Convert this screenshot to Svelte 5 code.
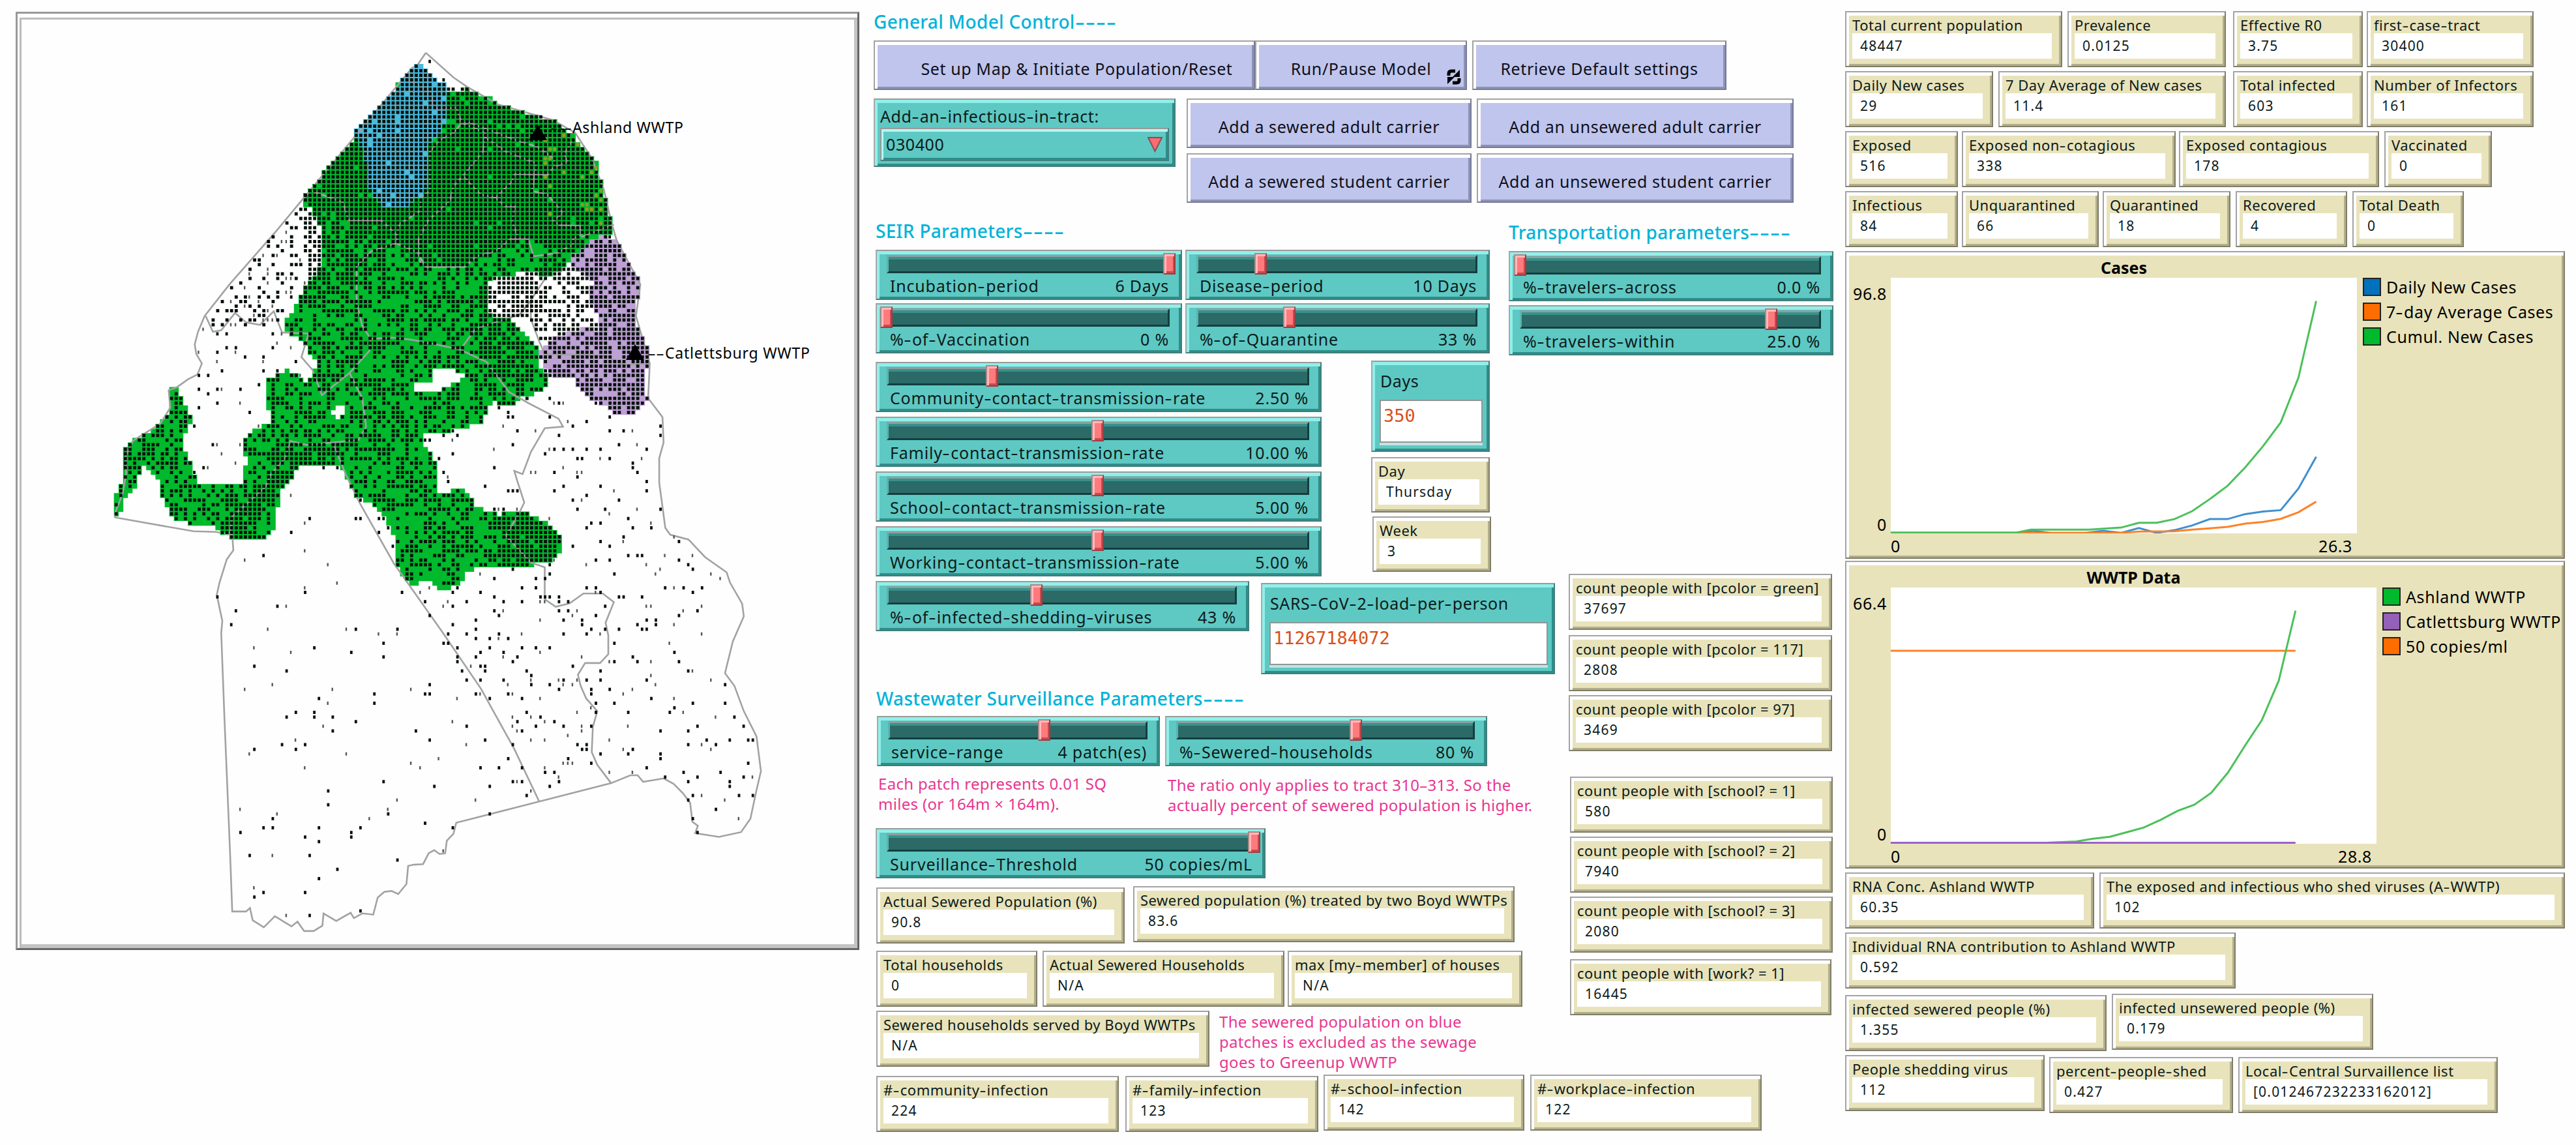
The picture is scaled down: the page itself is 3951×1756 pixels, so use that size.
<script lang="ts">
  type Point = [number, number];
  type Monitor = { label: string; value: string; w: number; gap?: number; drop?: number };
  type Slider = { label: string; value: string; w: number; knob: number };
  type Series = { color: string; points: Point[] };
  type Plot = {
    title: string; xMax: number; yMax: number; w: number; h: number;
    legend: { color: string; name: string }[]; series: Series[];
  };

  const GREEN = '#00b92c';

  // ---- map ----
  const CELL = 7.08;
  const SX = 0.8482;
  const SY = 0.4847;
  const ORIGIN = { x: 26, y: 20 };

  const parse = (s: string): Point[] => s.trim().split(/\s+/).map((p) => p.split(',').map(Number) as Point);

  const sewered = parse(`747,205 760,205 775,225 790,248 803,265 803,290 835,290 840,275 850,278 855,290 880,305
    900,325 930,348 960,362 985,375 1005,385 1020,405 1040,430 1050,460 1070,495 1080,520 1085,560 1092,610
    1100,660 1105,700 1112,740 1090,748 1070,762 1050,785 1035,810 1025,845 1005,862 985,872 965,860 950,858
    930,870 905,875 885,885 878,920 880,960 885,990 900,1003 925,1005 935,1035 948,1055 965,1085 975,1110
    972,1150 985,1180 995,1200 985,1225 965,1245 940,1262 930,1280 915,1290 905,1280 888,1270 880,1310
    870,1335 845,1352 815,1365 762,1370 765,1405 780,1440 792,1480 793,1520 787,1555 815,1555 830,1545
    852,1565 862,1600 900,1629 920,1614 945,1619 975,1639 1000,1663 1012,1697 1017,1721 1010,1756 985,1785
    945,1788 900,1799 870,1794 845,1809 832,1843 820,1858 808,1872 795,1863 780,1843 745,1846 730,1829
    722,1804 712,1782 720,1751 715,1702 700,1663 688,1614 665,1593 642,1573 632,1536 622,1500 610,1470
    548,1470 535,1490 525,1520 512,1545 503,1566 502,1614 500,1653 490,1692 475,1704 465,1714 455,1700
    418,1700 395,1683 378,1658 345,1658 320,1648 308,1624 297,1595 290,1546 285,1520 265,1480 258,1475
    250,1510 243,1555 235,1566 220,1595 218,1634 205,1642 205,1595 213,1550 225,1520 220,1460 222,1430
    240,1395 265,1370 290,1340 308,1300 305,1225 320,1225 335,1275 345,1310 345,1345 330,1375 333,1420
    345,1465 350,1500 362,1528 438,1530 445,1460 440,1400 455,1355 480,1345 497,1330 485,1300 480,1255
    485,1200 510,1180 520,1168 535,1180 555,1210 570,1165 580,1155 570,1135 555,1110 550,1080 530,1065
    515,1035 515,1010 530,985 540,950 555,900 575,860 583,830 582,750 575,700 560,660 545,640 548,610
    575,570 600,510 640,440 640,410 665,370 680,340 700,310 715,275 732,240`);

  const greenup = parse(`747,205 760,205 790,248 803,265 803,390 792,430 775,460 773,570 765,620 745,640 735,655
    698,655 680,635 668,600 668,520 655,490 650,450 640,430 640,410 665,370 680,340 700,310 732,240`);

  const catlettsburg = parse(`1090,745 1112,755 1125,790 1140,840 1155,880 1158,920 1150,960 1150,1020 1165,1070
    1175,1110 1175,1160 1162,1190 1162,1230 1172,1255 1165,1285 1145,1305 1120,1315 1100,1295 1070,1265
    1045,1230 1040,1190 1005,1190 980,1165 975,1110 990,1080 1030,1050 1060,1035 1085,1045 1080,1000
    1070,960 1068,920 1072,885 1050,860 1028,845 1035,810 1050,785 1070,762`);

  const holes = [
    parse('780,1170 820,1165 838,1185 825,1210 795,1235 748,1235 752,1215 780,1205'),
    parse('608,1280 622,1285 620,1310 606,1328 602,1305'),
    parse('661,552 669,552 669,582 661,582')
  ];

  const county = parse(`770,167 755,205 745,215 545,635 500,730 415,900 370,1000 358,1050 352,1090 355,1120 365,1150
    357,1185 340,1200 320,1225 305,1235 308,1290 290,1340 240,1395 228,1440 228,1500 222,1560 208,1624
    208,1637 350,1681 390,1683 420,1692 422,1741 410,1770 397,1843 392,1882 402,1965 400,2003 406,2280
    416,2700 420,2884 445,2884 452,2873 457,2912 477,2934 497,2899 527,2931 538,2916 550,2946 567,2946
    583,2929 585,2890 608,2914 634,2888 640,2905 655,2890 675,2894 683,2840 695,2822 708,2819 720,2829
    735,2797 738,2740 748,2736 765,2734 775,2700 785,2690 795,2702 805,2700 808,2660 820,2638 825,2603
    975,2536 1105,2478 1140,2453 1153,2453 1163,2474 1200,2463 1218,2480 1235,2510 1248,2541 1252,2600
    1262,2613 1257,2636 1300,2648 1340,2633 1357,2590 1368,2500 1376,2440 1368,2330 1345,2250 1328,2170
    1311,2130 1325,2030 1345,1950 1342,1910 1320,1843 1314,1811 1275,1763 1245,1707 1212,1692 1203,1670
    1192,1527 1192,1450 1200,1400 1198,1320 1172,1260 1175,1150 1150,1000 1158,900 1115,760 1105,700
    1092,600 1070,500 1040,420 1000,380 900,330 845,275 820,245 770,167`);

  const tracts = [
    '602,1400 625,1500 650,1590 712,1782 800,2000 870,2180 930,2370 975,2536',
    '602,1400 555,1408 525,1395 515,1450 490,1500 480,1540 420,1635 415,1690',
    `602,1400 648,1392 662,1350 655,1260 632,1180 668,1110 670,1072 710,1068 745,1075 830,1105 880,1145
     920,1240 955,1275 1010,1325 1018,1350 985,1355 960,1430 945,1500 930,1490 935,1520 948,1590 940,1619
     915,1695 960,1780 985,1795 985,1896 1005,1920 1030,1909 1055,1878 1090,1878 1110,1905 1095,1970
     1100,2010 1100,2070 1085,2098 1058,2098 1045,2135 1050,2170 1060,2210 1080,2250 1072,2300 1070,2380
     1080,2420 1105,2478`,
    `372,1000 385,1050 400,1045 425,990 445,1020 470,1028 495,985 510,1052 558,1055 545,1130 565,1170
     582,1250 632,1180`,
    '670,1072 655,1030 645,960 645,842 672,794 717,770',
    `737,251 755,268 778,292 784,333 794,347 825,340 835,389 821,419 794,444 777,481 777,605 760,626 760,667
     723,708 717,743 690,698 630,696 620,640 565,605`,
    '717,743 717,770 755,798 770,845',
    `835,389 851,389 876,406 939,447 971,464 1002,502 1002,529 990,554 931,550 924,578 896,626 869,615
     837,557 819,591 814,633 774,698 757,756 760,832`,
    '835,389 876,419 874,478 837,557',
    `876,433 916,481 969,516 963,605 990,615 1018,674 1000,698 1012,712 1049,715 1051,743 1036,756 1036,774
     1006,801 965,811 955,755 924,756 896,794 861,811 840,845 770,845`,
    '896,626 914,653 931,653 926,701 937,753',
    '1036,440 1020,488 1026,512 1002,529',
    '1110,710 1051,750',
    '990,870 960,950 940,995 860,1040 835,1100',
    '960,950 960,1010 975,1080 985,1120 1095,1125 1130,1155 1170,1150'
  ].map(parse);

  // household density per area, first hit wins
  const densities: [Point[], number][] = [
    [greenup, 0.94],
    [parse('740,250 803,265 860,290 940,340 960,440 850,380 800,420'), 0.85],
    [parse('803,290 860,290 1005,385 1080,520 1112,740 1050,745 1035,810 950,755 840,845 770,845 720,770 690,700 630,690 545,640 548,600 640,440 700,400'), 0.98],
    [catlettsburg, 0.78],
    [parse('875,870 985,865 975,1000 875,1000'), 0.9],
    [parse('960,850 1085,850 1085,1080 960,1085'), 0.62],
    [parse('500,1400 630,1400 620,1475 540,1475 500,1580 430,1700 380,1700 470,1540'), 0.88],
    [parse('900,1640 945,1619 975,1639 1000,1663 1012,1697 1017,1721 1010,1756 985,1785 900,1790'), 0.86],
    [parse('540,650 720,700 720,770 650,850 560,900'), 0.78],
    [parse('835,1030 900,1000 1000,1190 950,1270 880,1150'), 0.78],
    [parse('360,1040 500,1040 590,700 545,630'), 0.4],
    [sewered, 0.52],
    [parse('350,1040 560,1040 590,1180 480,1350 440,1540 330,1540 300,1220'), 0.07],
    [parse('200,1450 620,1450 720,1810 980,2540 820,2610 680,2900 400,2960'), 0.026],
    [parse('700,1700 1100,1860 1110,2480 975,2536'), 0.12],
    [county, 0.085]
  ];

  function inside([px, py]: Point, poly: Point[]) {
    let hit = false;
    for (let i = 0, j = poly.length - 1; i < poly.length; j = i++) {
      const [xi, yi] = poly[i];
      const [xj, yj] = poly[j];
      if (yi > py !== yj > py && px < ((xj - xi) * (py - yi)) / (yj - yi) + xi) hit = !hit;
    }
    return hit;
  }

  let seed = 7;
  function random() {
    seed = (seed * 1664525 + 1013904223) % 4294967296;
    return seed / 4294967296;
  }

  function buildPatches() {
    const out = { green: '', blue: '', purple: '', people: '', thin: '', infected: '' };
    for (let row = 2; row < 202; row++) {
      for (let col = 2; col < 182; col++) {
        const x = col * CELL;
        const y = row * CELL;
        const p: Point = [(x + ORIGIN.x + 3.5) / SX, (y + ORIGIN.y + 3.5) / SY];
        const open = holes.some((h) => inside(p, h));
        const colored = inside(p, sewered) || inside(p, catlettsburg);
        const square = `M${x.toFixed(1)} ${y.toFixed(1)}h7.4v7.4h-7.4z`;
        if (!open) {
          if (inside(p, catlettsburg)) out.purple += square;
          else if (inside(p, greenup)) out.blue += square;
          else if (inside(p, sewered)) out.green += square;
        }
        if (open || (!colored && !inside(p, county))) continue;
        const area = densities.find(([poly]) => inside(p, poly));
        if (!area || random() > area[1]) continue;
        const dot = (w: number) => `M${(x + 1.1).toFixed(1)} ${(y + 1).toFixed(1)}h${w}v5h-${w}z`;
        const kind = random();
        if (p[0] > 985 && p[1] > 420 && p[1] < 720 && kind < 0.1) out.infected += dot(4.5);
        else if (area[1] < 0.5 && kind < 0.35) out.thin += dot(2.4);
        else out.people += dot(area[1] < 0.2 ? 3.8 : 4.8);
      }
    }
    return out;
  }

  const patches = buildPatches();
  const line = (pts: Point[]) =>
    pts.map(([x, y]) => `${(x * SX - ORIGIN.x).toFixed(1)},${(y * SY - ORIGIN.y).toFixed(1)}`).join(' ');

  // ---- controls ----
  const seirRows: Slider[][] = [
    [
      { label: 'Incubation-period', value: '6 Days', w: 470, knob: 441 },
      { label: 'Disease-period', value: '10 Days', w: 467, knob: 106 }
    ],
    [
      { label: '%-of-Vaccination', value: '0 %', w: 470, knob: 7 },
      { label: '%-of-Quarantine', value: '33 %', w: 467, knob: 150 }
    ]
  ];
  const travel: Slider[] = [
    { label: '%-travelers-across', value: '0.0 %', w: 498, knob: 8 },
    { label: '%-travelers-within', value: '25.0 %', w: 498, knob: 393 }
  ];
  const rates: Slider[] = [
    { label: 'Community-contact-transmission-rate', value: '2.50 %', w: 684, knob: 169 },
    { label: 'Family-contact-transmission-rate', value: '10.00 %', w: 684, knob: 331 },
    { label: 'School-contact-transmission-rate', value: '5.00 %', w: 684, knob: 331 },
    { label: 'Working-contact-transmission-rate', value: '5.00 %', w: 684, knob: 331 }
  ];
  const shedding: Slider = { label: '%-of-infected-shedding-viruses', value: '43 %', w: 573, knob: 237 };
  const service: Slider[] = [
    { label: 'service-range', value: '4 patch(es)', w: 434, knob: 247 },
    { label: '%-Sewered-households', value: '80 %', w: 494, knob: 283 }
  ];
  const threshold: Slider = { label: 'Surveillance-Threshold', value: '50 copies/mL', w: 598, knob: 571 };

  const calendar: Monitor[] = [
    { label: 'Day', value: 'Thursday', w: 182 },
    { label: 'Week', value: '3', w: 182, gap: 2, drop: 6 }
  ];
  const sewerMonitors: Monitor[] = [
    { label: 'Actual Sewered Population (%)', value: '90.8', w: 381, drop: 2 },
    { label: 'Sewered population (%) treated by two Boyd WWTPs', value: '83.6', w: 585, gap: 13 }
  ];
  const houseMonitors: Monitor[] = [
    { label: 'Total households', value: '0', w: 247 },
    { label: 'Actual Sewered Households', value: 'N/A', w: 371, gap: 8 },
    { label: 'max [my-member] of houses', value: 'N/A', w: 360, gap: 5 }
  ];
  const servedMonitor: Monitor = { label: 'Sewered households served by Boyd WWTPs', value: 'N/A', w: 511 };
  const infections: Monitor[] = [
    { label: '#-community-infection', value: '224', w: 372, drop: 2 },
    { label: '#-family-infection', value: '123', w: 296, gap: 10, drop: 2 },
    { label: '#-school-infection', value: '142', w: 308, gap: 8 },
    { label: '#-workplace-infection', value: '122', w: 355, gap: 9 }
  ];
  const counts: Monitor[] = [
    { label: 'count people with [pcolor = green]', value: '37697', w: 404 },
    { label: 'count people with [pcolor = 117]', value: '2808', w: 404, drop: 8 },
    { label: 'count people with [pcolor = 97]', value: '3469', w: 404, drop: 6 },
    { label: 'count people with [school? = 1]', value: '580', w: 403, gap: 2, drop: 39 },
    { label: 'count people with [school? = 2]', value: '7940', w: 403, gap: 2, drop: 6 },
    { label: 'count people with [school? = 3]', value: '2080', w: 403, gap: 2, drop: 6 },
    { label: 'count people with [work? = 1]', value: '16445', w: 401, gap: 2, drop: 10 }
  ];

  const topMonitors: Monitor[][] = [
    [
      { label: 'Total current population', value: '48447', w: 333 },
      { label: 'Prevalence', value: '0.0125', w: 243, gap: 8 },
      { label: 'Effective R0', value: '3.75', w: 199, gap: 11 },
      { label: 'first-case-tract', value: '30400', w: 256, gap: 6 }
    ],
    [
      { label: 'Daily New cases', value: '29', w: 227 },
      { label: '7 Day Average of New cases', value: '11.4', w: 349, gap: 8 },
      { label: 'Total infected', value: '603', w: 199, gap: 11 },
      { label: 'Number of Infectors', value: '161', w: 256, gap: 6 }
    ],
    [
      { label: 'Exposed', value: '516', w: 173 },
      { label: 'Exposed non-cotagious', value: '338', w: 328, gap: 6 },
      { label: 'Exposed contagious', value: '178', w: 307, gap: 5 },
      { label: 'Vaccinated', value: '0', w: 165, gap: 8 }
    ],
    [
      { label: 'Infectious', value: '84', w: 173 },
      { label: 'Unquarantined', value: '66', w: 210, gap: 6 },
      { label: 'Quarantined', value: '18', w: 196, gap: 6 },
      { label: 'Recovered', value: '4', w: 171, gap: 8 },
      { label: 'Total Death', value: '0', w: 171, gap: 8 }
    ]
  ];
  const bottomMonitors: Monitor[][] = [
    [
      { label: 'RNA Conc. Ashland WWTP', value: '60.35', w: 382 },
      { label: 'The exposed and infectious who shed viruses (A-WWTP)', value: '102', w: 714, gap: 8 }
    ],
    [{ label: 'Individual RNA contribution to Ashland WWTP', value: '0.592', w: 599 }],
    [
      { label: 'infected sewered people (%)', value: '1.355', w: 401, drop: 4 },
      { label: 'infected unsewered people (%)', value: '0.179', w: 401, gap: 8, drop: 2 }
    ],
    [
      { label: 'People shedding virus', value: '112', w: 306 },
      { label: 'percent-people-shed', value: '0.427', w: 282, gap: 7, drop: 3 },
      { label: 'Local-Central Survaillence list', value: '[0.012467232233162012]', w: 398, gap: 8, drop: 3 }
    ]
  ];

  // ---- plots ----
  const plots: Plot[] = [
    {
      title: 'Cases', xMax: 26.3, yMax: 96.8, w: 715, h: 392,
      legend: [
        { color: '#0071bc', name: 'Daily New Cases' },
        { color: '#ff6d00', name: '7-day Average Cases' },
        { color: GREEN, name: 'Cumul. New Cases' }
      ],
      series: [
        { color: '#3f8fcf', points: [[0, 0], [7, 0], [8, 1], [9, 0.2], [11, 0.2], [12, 1], [13, 0.2], [14, 2], [15, 0.2], [16, 1.2], [17, 3], [18, 5.4], [19, 5.4], [20, 7.3], [21, 8.3], [22, 8.8], [23, 17], [24, 29]] },
        { color: '#ff8127', points: [[0, 0.2], [13, 0.2], [14, 0.7], [16, 0.8], [17, 1.4], [18, 1.9], [19, 2.5], [20, 3.7], [21, 4.3], [22, 5.5], [23, 8], [24, 12]] },
        { color: '#4cc05a', points: [[0, 0.3], [7.1, 0.3], [7.9, 1.4], [11.2, 1.4], [13, 2.2], [14, 4], [15, 4], [16, 5.4], [17, 8.4], [18, 13], [19, 18], [20, 25], [21, 33], [22, 42], [23, 59], [24, 88]] }
      ]
    },
    {
      title: 'WWTP Data', xMax: 28.8, yMax: 66.4, w: 745, h: 393,
      legend: [
        { color: GREEN, name: 'Ashland WWTP' },
        { color: '#9461b8', name: 'Catlettsburg WWTP' },
        { color: '#ff6d00', name: '50 copies/ml' }
      ],
      series: [
        { color: '#ff8127', points: [[0, 50], [24, 50]] },
        { color: '#4cc05a', points: [[0, 0], [9, 0.2], [11, 0.6], [12, 1.3], [13, 1.8], [14, 3], [15, 4.2], [16, 6.2], [17, 8.5], [18, 10.1], [19, 13.2], [20, 18.5], [21, 25.4], [22, 32], [23, 42.2], [24, 60.4]] },
        { color: '#9b63c4', points: [[0, 0.25], [24, 0.25]] }
      ]
    }
  ];

  const curve = (p: Plot, s: Series) =>
    s.points.map(([x, y]) => `${((x / p.xMax) * p.w).toFixed(1)},${(p.h - (y / p.yMax) * p.h).toFixed(1)}`).join(' ');
</script>

{#snippet hyphenated(text: string)}
  {#each text.split('-') as part, i}{#if i > 0}<span class="hyphen">-</span>{/if}{part}{/each}
{/snippet}

{#snippet monitor(m: Monitor)}
  <div class="widget monitor" style:width="{m.w}px" style:margin-left="{m.gap ?? 0}px" style:margin-top="{m.drop ?? 0}px">
    <div class="monitor-label">{@render hyphenated(m.label)}</div>
    <div class="monitor-value">{m.value}</div>
  </div>
{/snippet}

{#snippet slider(s: Slider)}
  <div class="widget slider" style:width="{s.w}px">
    <div class="track"></div>
    <div class="knob" style:left="{s.knob - 2}px"></div>
    <div class="slider-text"><span>{@render hyphenated(s.label)}</span><span>{s.value}</span></div>
  </div>
{/snippet}

{#snippet heading(text: string)}
  <h2>{text}<span class="dashes">----</span></h2>
{/snippet}

{#snippet plot(p: Plot)}
  <div class="widget plot">
    <div class="plot-y"><span>{p.yMax}</span><span>0</span></div>
    <div class="plot-main" style:width="{p.w}px">
      <div class="plot-title">{p.title}</div>
      <svg width={p.w} height={p.h} viewBox="0 0 {p.w} {p.h}">
        <rect width={p.w} height={p.h} fill="#fff" />
        {#each p.series as s}
          <polyline points={curve(p, s)} fill="none" stroke={s.color} stroke-width="3" />
        {/each}
      </svg>
      <div class="plot-x"><span>0</span><span>{p.xMax}</span></div>
    </div>
    <div class="legend">
      {#each p.legend as l}
        <div class="legend-row"><i style:background={l.color}></i><span>{@render hyphenated(l.name)}</span></div>
      {/each}
    </div>
  </div>
{/snippet}

<main>
  <div class="view">
    <svg width="1285" height="1429" viewBox="0 0 1285 1429">
      <path d={patches.green} fill={GREEN} />
      <path d={patches.blue} fill="#4cb9dc" />
      <path d={patches.purple} fill="#bda0d4" />
      <polyline class="border" points={line(county)} />
      {#each tracts as t}
        <polyline class="border" points={line(t)} />
      {/each}
      <path d={patches.people} fill="#06100a" />
      <path d={patches.thin} fill="#555" />
      <path d={patches.infected} fill="#a3911f" />
      <path d="M799 171l14 24h-28zM948 508l14 24h-28z" />
      <text x="818" y="184" textLength="33" lengthAdjust="spacingAndGlyphs">---</text>
      <text x="852" y="184" textLength="170">Ashland WWTP</text>
      <text x="967" y="530" textLength="26" lengthAdjust="spacingAndGlyphs">--</text>
      <text x="994" y="530" textLength="222">Catlettsburg WWTP</text>
    </svg>
  </div>

  <div class="controls">
    {@render heading('General Model Control')}
    <div class="row setup-row">
      <button class="widget setup">Set up Map &amp; Initiate Population/Reset</button>
      <button class="widget run">
        Run/Pause Model
        <svg class="loop" width="22" height="24" viewBox="0 0 22 24">
          <path d="M3 10V7q0-4 4-4h6" fill="none" stroke="#000" stroke-width="5" />
          <path d="M20 1v11H9z" />
          <path d="M19 14v3q0 4-4 4H9" fill="none" stroke="#000" stroke-width="5" />
          <path d="M1 23V12h11z" />
        </svg>
      </button>
      <button class="widget retrieve">Retrieve Default settings</button>
    </div>

    <div class="row carrier-row">
      <div class="widget chooser">
        <div>{@render hyphenated('Add-an-infectious-in-tract:')}</div>
        <div class="choice">
          <span>030400</span>
          <svg width="24" height="24" viewBox="0 0 24 24"><path d="M1 1h21L11.500 22z" fill="#fb6b70" stroke="#84525a" stroke-width="2" /></svg>
        </div>
      </div>
      <div class="carriers">
        <button class="widget">Add a sewered adult carrier</button>
        <button class="widget">Add an unsewered adult carrier</button>
        <button class="widget">Add a sewered student carrier</button>
        <button class="widget">Add an unsewered student carrier</button>
      </div>
    </div>

    <div class="row params">
      <div class="seir">
        {@render heading('SEIR Parameters')}
        {#each seirRows as r}
          <div class="row slider-row">{#each r as s}{@render slider(s)}{/each}</div>
        {/each}
      </div>
      <div class="travel">
        {@render heading('Transportation parameters')}
        {#each travel as s}{@render slider(s)}{/each}
      </div>
    </div>

    <div class="row body">
      <div class="left">
        <div class="row rates-row">
          <div class="rates">{#each rates as s}{@render slider(s)}{/each}</div>
          <div class="calendar">
            <div class="widget input days"><label for="days">Days</label><div class="field" id="days">350</div></div>
            {#each calendar as m}{@render monitor(m)}{/each}
          </div>
        </div>
        <div class="row shed-row">
          {@render slider(shedding)}
          <div class="widget input load">
            <label for="load">{@render hyphenated('SARS-CoV-2-load-per-person')}</label>
            <div class="field" id="load">11267184072</div>
          </div>
        </div>

        <div class="waste">{@render heading('Wastewater Surveillance Parameters')}</div>
        <div class="row service-row">{#each service as s}{@render slider(s)}{/each}</div>
        <div class="row note-row">
          <p class="patch-note">Each patch represents 0.01 SQ<br />miles (or 164m × 164m).</p>
          <p class="ratio-note">The ratio only applies to tract 310–313. So the<br />actually percent of sewered population is higher.</p>
        </div>
        <div class="row">{@render slider(threshold)}</div>
        <div class="row sewer-row">{#each sewerMonitors as m}{@render monitor(m)}{/each}</div>
        <div class="row house-row">{#each houseMonitors as m}{@render monitor(m)}{/each}</div>
        <div class="row served-row">
          {@render monitor(servedMonitor)}
          <p class="blue-note">The sewered population on blue<br />patches is excluded as the sewage<br />goes to Greenup WWTP</p>
        </div>
      </div>
      <div class="counts">{#each counts as m}{@render monitor(m)}{/each}</div>
    </div>
    <div class="row infections">{#each infections as m}{@render monitor(m)}{/each}</div>
  </div>

  <div class="results">
    {#each topMonitors as r}
      <div class="row result-row">{#each r as m}{@render monitor(m)}{/each}</div>
    {/each}
    <div class="plots">{#each plots as p}{@render plot(p)}{/each}</div>
    {#each bottomMonitors as r}
      <div class="row result-row">{#each r as m}{@render monitor(m)}{/each}</div>
    {/each}
  </div>
</main>

<style>
  :global(body) { margin: 0; background: #fefefe; }
  * { box-sizing: border-box; }
  main {
    display: flex;
    width: 3951px;
    height: 1756px;
    overflow: hidden;
    font-family: 'Noto Sans', 'Open Sans', sans-serif;
    font-size: 25px;
    letter-spacing: 0.6px;
    color: #0c1a1a;
    white-space: nowrap;
  }
  .row { display: flex; align-items: flex-start; }
  h2 {
    margin: 0;
    font-size: 28px;
    font-weight: 500;
    line-height: 30px;
    letter-spacing: 0.3px;
    color: #00b3d9;
  }
  .dashes {
    display: inline-block;
    letter-spacing: 0.7px;
    transform: scaleX(1.65);
    transform-origin: left;
  }
  .hyphen { display: inline-block; margin: 0 2px 0 1.5px; transform: scaleX(1.4); }
  p { margin: 0; color: #e93590; font-size: 24px; line-height: 31px; letter-spacing: 0.3px; }

  .widget {
    --light: #fff;
    --dark: #b3af8c;
    flex: none;
    border: 2px solid;
    border-color: #a3a3a3 #7f7d66 #7f7d66 #a3a3a3;
    box-shadow: inset 4px 5px 0 var(--light), inset -3px -3px 0 var(--dark);
  }

  /* map */
  .view {
    flex: none;
    width: 1294px;
    height: 1439px;
    margin: 18px 0 0 24px;
    border: 3px solid;
    border-color: #999 #666 #666 #999;
    box-shadow: inset 3px 6px 0 #fff, inset 6px 9px 0 #bbb, inset -5px -6px 0 #c4c4c4;
  }
  .view svg { display: block; margin: -1px; letter-spacing: 0; }
  .border { fill: none; stroke: #a2a2a2; stroke-width: 2.6; }
  .view text { font-size: 23px; }

  /* controls */
  .controls { flex: none; width: 1512px; padding: 18px 0 0 22px; }
  button {
    height: 76px;
    padding: 9px 0 0;
    font: inherit;
    letter-spacing: inherit;
    color: #0d0f1c;
    background: #bfc5ec;
  }
  button.widget { --dark: #8e92b4; border-color: #a3a3a3 #75799a #75799a #a3a3a3; }
  .setup-row { margin-top: 14px; }
  .setup { width: 585px; padding-left: 38px; }
  .run { position: relative; width: 325px; }
  .loop { position: absolute; right: 7px; bottom: 6px; }
  .retrieve { width: 390px; margin-left: 8px; }
  .carrier-row { margin-top: 13px; }
  .chooser {
    width: 463px;
    height: 105px;
    padding: 8px 8px 0;
    line-height: 35px;
  }
  .chooser, .slider, .input { --light: #90f0ea; --dark: #2f8d88; background: #5ec8c3; border-color: #9a9a9a #3f7f7c #3f7f7c #a8a8a8; }
  .choice {
    display: flex;
    align-items: center;
    justify-content: space-between;
    height: 51px;
    padding: 0 7px;
    border: 2px solid;
    border-color: #999 #3f7f7c #3f7f7c #999;
    box-shadow: inset 3px 4px 0 #b4f6f2, inset -3px -3px 0 #2f8d88;
  }
  .carriers { display: grid; grid-template-columns: 437px 486px; gap: 8px; margin-left: 17px; }

  .params { height: 214px; margin-top: 28px; padding-left: 3px; }
  .seir { flex: none; width: 971px; }
  .params h2 { margin-bottom: 14px; }
  .slider-row { gap: 5px; margin-bottom: 5px; }
  .travel { padding-top: 2px; }
  .travel .slider { margin-bottom: 6px; }

  .slider { position: relative; height: 77px; padding: 6px 17px 0 15px; }
  .track {
    height: 28px;
    background: #2b6a67;
    border: 3px solid;
    border-color: #8f9f9e #123f3e #123f3e #5ab5b0;
    box-shadow: inset 0 4px 0 #37918c;
  }
  .knob {
    position: absolute;
    top: 3px;
    width: 19px;
    height: 33px;
    background: #ff7a7d;
    border: 2px solid;
    border-color: #a88 #a03c40 #a03c40 #a88;
    box-shadow: inset 3px 3px 0 #ffb9b9, inset -2px -3px 0 #c9494e;
  }
  .slider-text { display: flex; justify-content: space-between; padding: 2px 1px 0 5px; line-height: 34px; letter-spacing: 0.8px; }

  .body { padding-left: 3px; }
  .left { flex: none; width: 1063px; }
  .rates { display: flex; flex-direction: column; gap: 7px; padding-top: 2px; }
  .calendar { margin-left: 76px; }
  .calendar .monitor { height: 85px; }
  .rates-row { height: 330px; }
  .input { padding: 12px 9px 0 11px; }
  .input label { display: block; height: 46px; padding-left: 1px; }
  .field {
    height: 66px;
    padding: 5px 4px 0;
    font: 27px/35px 'DejaVu Sans Mono', monospace;
    letter-spacing: 0;
    color: #d8501c;
    background: #fff;
    border: 2px solid #8f9797;
    box-shadow: 0 4px 0 #c3e3e2;
  }
  .days { width: 182px; height: 140px; margin-bottom: 8px; }
  .shed-row { margin-top: 8px; }
  .load { width: 451px; height: 140px; margin: 3px 0 0 18px; }
  .waste { margin: 22px 0 12px 1px; }
  .service-row { gap: 8px; padding-left: 2px; }
  .note-row { margin: 11px 0 22px; padding-left: 4px; }
  .patch-note { width: 444px; }
  .ratio-note { padding-top: 2px; margin-bottom: -2px; }
  .sewer-row { margin-top: 12px; padding-left: 1px; }
  .house-row { margin-top: 11px; padding-left: 1px; }
  .served-row { margin-top: 6px; padding-left: 1px; }
  .blue-note { margin: 1px 0 0 15px; }
  .counts { padding-top: 327px; }
  .infections { margin-top: 4px; padding-left: 4px; }

  /* monitors */
  .monitor { height: 86px; padding: 5px 14px 0 9px; background: #e8e3bb; font-size: 22px; letter-spacing: 0.5px; }
  .monitor-label { height: 27px; line-height: 29px; }
  .monitor-value { height: 39px; padding-left: 12px; font-size: 21px; letter-spacing: 1.2px; line-height: 38px; background: #fff; }

  /* results */
  .results { flex: none; width: 1104px; padding: 17px 0 0; }
  .result-row { margin-bottom: 6px; }
  .plots { margin-bottom: 6px; }
  .plot {
    display: flex;
    width: 1104px;
    height: 472px;
    margin-bottom: 3px;
    background: #e8e3bb;
    color: #000;
  }
  .plot-y {
    display: flex;
    flex-direction: column;
    justify-content: space-between;
    width: 68px;
    height: 434px;
    padding: 46px 6px 0 0;
    text-align: right;
  }
  .plot-title { height: 39px; padding-top: 5px; line-height: 36px; font-weight: 700; letter-spacing: 0; text-align: center; }
  .plot-main svg { display: block; }
  .plot-x { display: flex; justify-content: space-between; padding: 2px 7px 0 0; line-height: 34px; }
  .legend { padding: 39px 0 0 9px; }
  .legend-row { display: flex; align-items: center; gap: 8px; height: 28px; margin-bottom: 10px; }
  .legend-row i { width: 28px; height: 28px; border: 2px solid #222; }
</style>
